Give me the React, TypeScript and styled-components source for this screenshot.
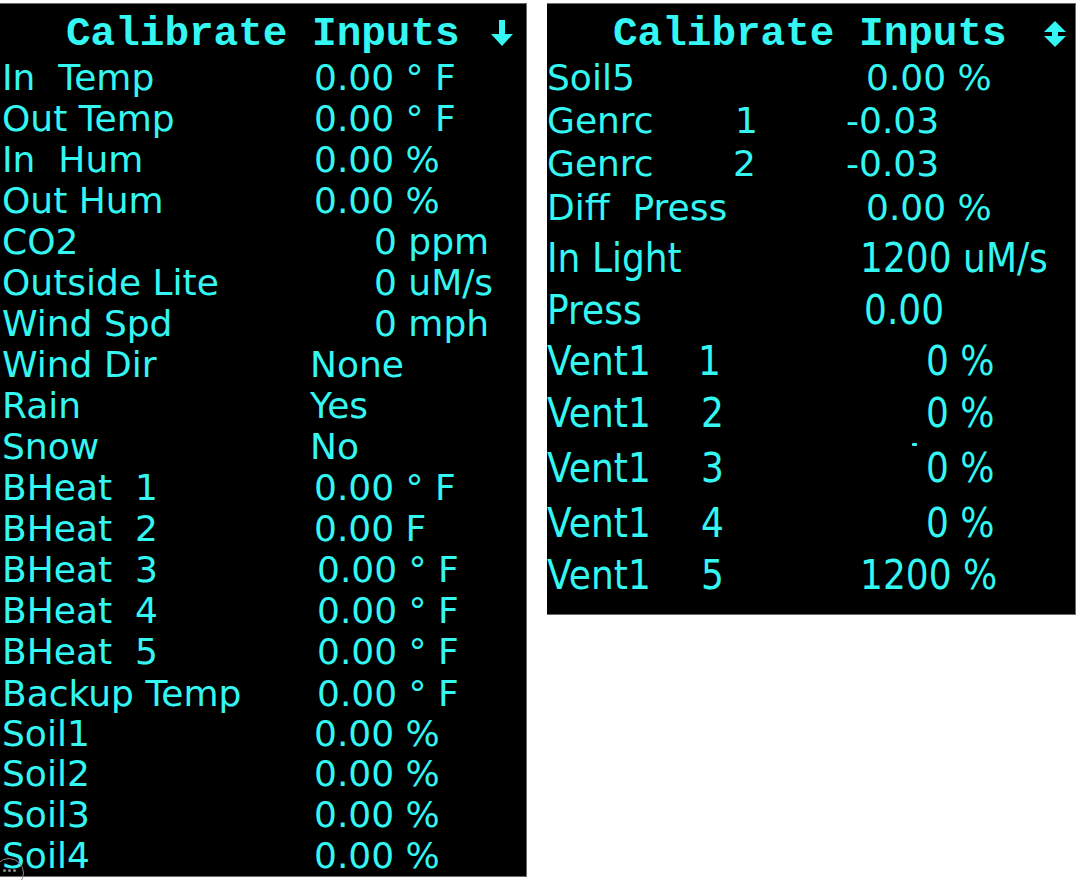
import React from 'react';
import styled, { createGlobalStyle } from 'styled-components';

const CYAN = '#34f6f3';

const Global = createGlobalStyle`
  html, body { margin: 0; padding: 0; background: #ffffff; }
  body { width: 1079px; height: 880px; overflow: hidden; font-family: "DejaVu Sans", "Noto Sans", sans-serif; }
`;

const Page = styled.main`
  display: flex;
  align-items: flex-start;
  gap: 20px;
  padding-top: 3px;
  width: 1079px;
  height: 880px;
  box-sizing: border-box;
  position: relative;
`;

const Screen = styled.section<{ $w: number; $h: number }>`
  position: relative;
  width: ${(p) => p.$w}px;
  height: ${(p) => p.$h}px;
  flex: none;
  box-sizing: border-box;
  background: #000;
  border-top: 1px solid #6a6a6a;
  border-right: 1px solid #6a6a6a;
  border-bottom: 1px solid #6a6a6a;
  color: ${CYAN};
  display: flex;
  flex-direction: column;
  overflow: hidden;
`;

const Title = styled.h1`
  margin: 0;
  height: 53px;
  box-sizing: border-box;
  padding: 7px 0 0 66px;
  display: flex;
  align-items: center;
  font-family: "Liberation Mono", "DejaVu Sans Mono", monospace;
  font-weight: 700;
  font-size: 41px;
  line-height: 46px;
  letter-spacing: 0;
  white-space: pre;
  color: ${CYAN};
`;

const TitleIcon = styled.svg<{ $gap: number }>`
  flex: none;
  margin-left: ${(p) => p.$gap}px;
  width: 24px;
  height: 30px;
`;

const Row = styled.div<{ $h: number; $sy?: number; $pad?: number }>`
  display: flex;
  align-items: center;
  height: ${(p) => p.$h}px;
  flex: none;
  padding-left: ${(p) => p.$pad ?? 0}px;
  font-size: 36px;
  line-height: 1;
  white-space: pre;
  transform: scaleY(${(p) => p.$sy ?? 1});
  transform-origin: center;
`;

const Cell = styled.span<{ $w?: number }>`
  display: block;
  flex: none;
  width: ${(p) => (p.$w !== undefined ? `${p.$w}px` : 'auto')};
`;

const Mark = styled.span`
  position: absolute;
  left: 365px;
  top: 439px;
  width: 5px;
  height: 3px;
  background: ${CYAN};
  border-radius: 1px;
`;

const MoreBadge = styled.div`
  position: absolute;
  left: -6px;
  top: 858px;
  width: 30px;
  height: 30px;
  border-radius: 50%;
  border: 1px solid #8a8a8a;
  box-sizing: border-box;
  display: flex;
  justify-content: center;
  padding-top: 10px;
  gap: 2px;
`;

const Dot = styled.span`
  width: 3px;
  height: 3px;
  background: #8a8a8a;
  border-radius: 50%;
`;

type Item = { label: string; num?: string; numX?: number; value: string; vx: number; h: number; sy?: number };

const LEFT_PAD = 2;

const leftRows: Item[] = [
  { label: 'In  Temp', value: '0.00 ° F', vx: 314, h: 41 },
  { label: 'Out Temp', value: '0.00 ° F', vx: 314, h: 41 },
  { label: 'In  Hum', value: '0.00 %', vx: 314, h: 41 },
  { label: 'Out Hum', value: '0.00 %', vx: 314, h: 41 },
  { label: 'CO2', value: '0 ppm', vx: 374, h: 41 },
  { label: 'Outside Lite', value: '0 uM/s', vx: 374, h: 41 },
  { label: 'Wind Spd', value: '0 mph', vx: 374, h: 41 },
  { label: 'Wind Dir', value: 'None', vx: 310, h: 41 },
  { label: 'Rain', value: 'Yes', vx: 310, h: 41 },
  { label: 'Snow', value: 'No', vx: 310, h: 41 },
  { label: 'BHeat  1', value: '0.00 ° F', vx: 314, h: 41 },
  { label: 'BHeat  2', value: '0.00 F', vx: 314, h: 41 },
  { label: 'BHeat  3', value: '0.00 ° F', vx: 317, h: 41 },
  { label: 'BHeat  4', value: '0.00 ° F', vx: 317, h: 41 },
  { label: 'BHeat  5', value: '0.00 ° F', vx: 317, h: 42 },
  { label: 'Backup Temp', value: '0.00 ° F', vx: 317, h: 42 },
  { label: 'Soil1', value: '0.00 %', vx: 314, h: 38 },
  { label: 'Soil2', value: '0.00 %', vx: 314, h: 41 },
  { label: 'Soil3', value: '0.00 %', vx: 314, h: 41 },
  { label: 'Soil4', value: '0.00 %', vx: 314, h: 41 },
];

const rightRows: Item[] = [
  { label: 'Soil5', value: '0.00 %', vx: 319, h: 41 },
  { label: 'Genrc', num: '1', numX: 188, value: '-0.03', vx: 299, h: 45 },
  { label: 'Genrc', num: '2', numX: 186, value: '-0.03', vx: 299, h: 41 },
  { label: 'Diff  Press', value: '0.00 %', vx: 319, h: 47 },
  { label: 'In Light', value: '1200 uM/s', vx: 313, h: 54, sy: 1.15 },
  { label: 'Press', value: '0.00', vx: 317, h: 50, sy: 1.15 },
  { label: 'Vent1', num: '1', numX: 151, value: '0 %', vx: 379, h: 52, sy: 1.15 },
  { label: 'Vent1', num: '2', numX: 154, value: '0 %', vx: 379, h: 52, sy: 1.15 },
  { label: 'Vent1', num: '3', numX: 154, value: '0 %', vx: 379, h: 58, sy: 1.15 },
  { label: 'Vent1', num: '4', numX: 154, value: '0 %', vx: 379, h: 52, sy: 1.15 },
  { label: 'Vent1', num: '5', numX: 154, value: '1200 %', vx: 313, h: 52, sy: 1.15 },
];

function DataRow({ item, pad }: { item: Item; pad: number }) {
  const labelW = (item.numX ?? item.vx) - pad;
  return (
    <Row $h={item.h} $sy={item.sy} $pad={pad}>
      <Cell $w={labelW}>{item.label}</Cell>
      {item.num !== undefined && item.numX !== undefined && <Cell $w={item.vx - item.numX}>{item.num}</Cell>}
      <Cell>{item.value}</Cell>
    </Row>
  );
}

function DownArrow() {
  return (
    <TitleIcon $gap={30} viewBox="0 0 24 30" aria-hidden="true">
      <rect x="9" y="1" width="6" height="18" fill={CYAN} />
      <polygon points="1,15 23,15 12,27" fill={CYAN} />
    </TitleIcon>
  );
}

function UpDownArrow() {
  return (
    <TitleIcon $gap={36} viewBox="0 0 24 30" aria-hidden="true">
      <polygon points="1,13 23,13 12,2" fill={CYAN} />
      <rect x="9" y="11" width="6" height="8" fill={CYAN} />
      <polygon points="1,17 23,17 12,28" fill={CYAN} />
    </TitleIcon>
  );
}

export default function App() {
  return (
    <>
      <Global />
      <Page>
        <Screen $w={527} $h={874}>
          <Title>
            Calibrate Inputs
            <DownArrow />
          </Title>
          {leftRows.map((r, i) => (
            <DataRow key={i} item={r} pad={LEFT_PAD} />
          ))}
        </Screen>
        <Screen $w={529} $h={612}>
          <Title>
            Calibrate Inputs
            <UpDownArrow />
          </Title>
          {rightRows.map((r, i) => (
            <DataRow key={i} item={r} pad={0} />
          ))}
          <Mark />
        </Screen>
        <MoreBadge>
          <Dot />
          <Dot />
          <Dot />
        </MoreBadge>
      </Page>
    </>
  );
}
